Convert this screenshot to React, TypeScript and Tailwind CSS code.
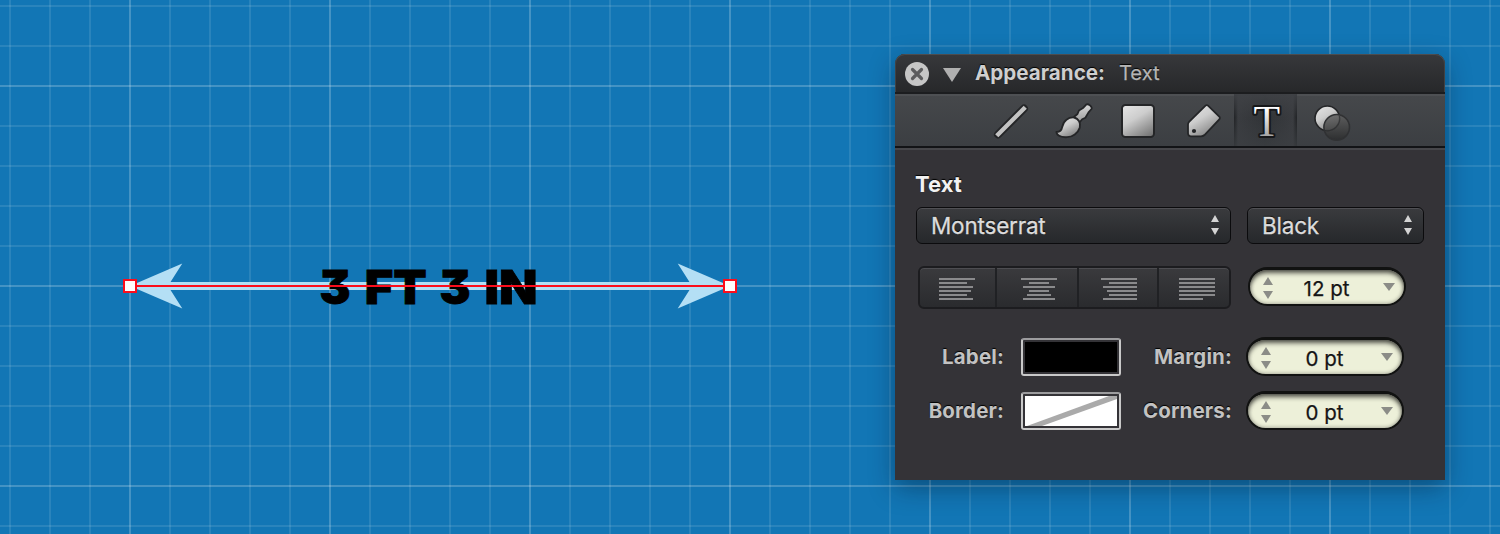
import React from 'react';

const TEXT_SHADOW = '[text-shadow:0_-1px_1px_#000]';

function Canvas() {
  const lines = [];
  for (let x = 9; x < 1500; x += 40) {
    lines.push(
      <rect key={'v' + x} x={x} y={0} width={2} height={534} fill="#fff" opacity={(x - 129) % 200 === 0 ? 0.21 : 0.1} />
    );
  }
  for (let y = 5; y < 534; y += 40) {
    lines.push(
      <rect key={'h' + y} x={0} y={y} width={1500} height={2} fill="#fff" opacity={(y - 85) % 200 === 0 ? 0.21 : 0.1} />
    );
  }
  return (
    <svg className="absolute inset-0" width="1500" height="534" viewBox="0 0 1500 534" role="img" aria-label="Dimension line">
      {lines}
      <path
        fill="#b4dff5"
        d="M130 286 182.300 263.6 170.500 282H689.5L677.700 263.6 730 286 677.700 308.400 689.5 290H170.5L182.300 308.400Z"
      />
      <g
        className="[font-feature-settings:'cv09'] font-[Inter,sans-serif]"
        fontWeight="900"
        fontSize="46.200"
        fill="#000"
        stroke="#000"
        strokeWidth="0.8"
      >
        <text x="319.500" y="304" textLength="31" lengthAdjust="spacingAndGlyphs">3</text>
        <text x="364.800" y="304" textLength="62" lengthAdjust="spacingAndGlyphs">FT</text>
        <text x="439.500" y="304" textLength="31" lengthAdjust="spacingAndGlyphs">3</text>
        <text x="484.500" y="304" textLength="53" lengthAdjust="spacingAndGlyphs">IN</text>
      </g>
      <path d="M130 286H730" stroke="#fc0d1b" strokeWidth="2" />
      <rect x="124" y="280" width="12" height="12" fill="#fff" stroke="#fc0d1b" strokeWidth="2" />
      <rect x="724" y="280" width="12" height="12" fill="#fff" stroke="#fc0d1b" strokeWidth="2" />
    </svg>
  );
}

function Gradients() {
  return (
    <svg className="absolute" width="0" height="0" aria-hidden="true">
      <defs>
        <linearGradient id="metal" x1="0.2" y1="0" x2="0.8" y2="1">
          <stop offset="0" stopColor="#e2e2e2" />
          <stop offset="0.4" stopColor="#cdcdcd" />
          <stop offset="1" stopColor="#777" />
        </linearGradient>
        <linearGradient id="plain" x1="0" y1="0" x2="0" y2="1">
          <stop offset="0" stopColor="#dadada" />
          <stop offset="1" stopColor="#9a9a9a" />
        </linearGradient>
        <linearGradient id="letter" x1="0" y1="0" x2="0" y2="1">
          <stop offset="0.25" stopColor="#fff" />
          <stop offset="0.8" stopColor="#a8a8a8" />
        </linearGradient>
        <linearGradient id="lens" x1="0" y1="0" x2="0" y2="1">
          <stop offset="0" stopColor="#626262" />
          <stop offset="1" stopColor="#2b2c2d" />
        </linearGradient>
      </defs>
    </svg>
  );
}

function Toolbar() {
  return (
    <div className="flex h-14 border-b-2 border-[#46464a] bg-linear-to-b from-[#46484b] to-[#3b3e42] pl-[84px] shadow-[inset_0_2px_0_#4e5053,inset_0_-2px_0_#121316]">
      <svg width="64" height="52" viewBox="979 94 64 52">
        <path d="M998 134.500 1024 108.500" stroke="#242527" strokeWidth="8" strokeLinecap="round" />
        <path d="M998.300 134.200 1023.700 108.800" stroke="#c3c3c3" strokeWidth="4.400" strokeLinecap="square" />
      </svg>
      <svg width="64" height="52" viewBox="1043 94 64 52">
        <path
          d="M1074.200 116.700 1077.500 114 1079 110.400 1083.400 107.700 1086.200 104.600Q1087.700 103.600 1090 105.400 1092.400 107.500 1091.500 109L1088.500 112.400 1085.400 117.700 1082.200 119.200 1079.500 122.500Z"
          fill="url(#plain)" stroke="#242527" strokeWidth="1.800" strokeLinejoin="round"
        />
        <path
          d="M1056.400 132Q1061.200 132.300 1062.300 126.800C1063.300 120.800 1068.500 117 1074 117.500 1078.800 118.500 1080.900 123 1079.800 127.600 1078 133.200 1072.500 137 1067 137.200 1062 137.500 1057 136 1056.400 132Z"
          fill="url(#metal)" stroke="#242527" strokeWidth="1.800" strokeLinejoin="round"
        />
      </svg>
      <svg width="64" height="52" viewBox="1107 94 64 52">
        <rect x="1122" y="105" width="32" height="32" rx="3.500" fill="url(#metal)" stroke="#242527" strokeWidth="2" />
      </svg>
      <svg width="63" height="52" viewBox="1171 94 63 52">
        <path
          d="M1205.500 105.600Q1206.800 104.600 1208 105.700L1219.500 116.800Q1220.400 118 1219.500 119.200L1204.500 135Q1203 136.300 1201 136.300H1191Q1188.300 136.300 1188 133.500V124.500Q1188 123 1189.300 121.700Z"
          fill="url(#metal)" stroke="#242527" strokeWidth="1.800"
        />
        <circle cx="1194" cy="131" r="2.100" fill="#242527" />
      </svg>
      <svg
        className="bg-[linear-gradient(180deg,rgba(64,66,70,0.9)_0,rgba(50,53,57,0)_45%,rgba(60,63,67,0.7)_100%),linear-gradient(90deg,#222427_0,#2b2d30_2px,#3a3c40_4px,#303336_50%,#3a3c40_59px,#2b2d30_61px,#222427_63px)]"
        width="63" height="52" viewBox="1234 94 63 52"
      >
        <text
          x="1266.700" y="136" textAnchor="middle" fontSize="43.500" fill="url(#letter)" stroke="#17181a" strokeWidth="4"
          paintOrder="stroke" strokeLinejoin="round" className="font-['Liberation_Serif',serif]"
        >
          T
        </text>
      </svg>
      <svg width="70" height="52" viewBox="1297 94 70 52">
        <circle cx="1327.300" cy="118.300" r="12.300" fill="url(#metal)" stroke="#242527" strokeWidth="1.600" />
        <circle cx="1336.700" cy="127.300" r="12.800" fill="url(#lens)" fillOpacity="0.85" stroke="#303133" strokeWidth="1.600" />
        <path d="M1339.500 116A12.300 12.300 0 0 1 1325 130.500" fill="none" stroke="#242527" strokeOpacity="0.5" strokeWidth="1.200" />
      </svg>
    </div>
  );
}

function Select({ value, className }: { value: string; className: string }) {
  return (
    <div
      className={`flex h-[37px] items-center justify-between rounded-[6px] border-[1.5px] border-[#0b0b0d] bg-linear-to-b from-[#3a3b3e] to-[#26282b] pl-[14px] pr-[10px] shadow-[inset_0_1px_0_#505054] ${className}`}
    >
      <span className={`pt-[2px] text-[22.500px] leading-none text-[#dcdcdc] [-webkit-text-stroke:0.3px_#dcdcdc] ${TEXT_SHADOW}`}>
        {value}
      </span>
      <svg width="10" height="22" viewBox="0 0 10 22" fill="#d4d4d4" className="-mt-[2px]">
        <path d="M5 1 9 8H1ZM5 21 9 14H1Z" />
      </svg>
    </div>
  );
}

const ALIGN: number[][][] = [
  [[0, 36], [0, 28], [0, 34], [0, 32], [0, 28], [0, 34]],
  [[0, 36], [8, 20], [2, 32], [8, 20], [6, 24], [2, 32]],
  [[0, 36], [8, 28], [2, 34], [6, 30], [8, 28], [2, 34]],
  [[0, 36], [0, 36], [0, 36], [0, 36], [0, 36], [0, 24]],
];
const SEG_CLASS = [
  'w-[77px] border-r-2 pl-[19px]',
  'w-[82px] border-r-2 pl-[24px]',
  'w-[80px] border-r-2 pl-[22px]',
  'w-[70px] pl-[20px]',
];

function AlignButtons() {
  return (
    <div className="ml-[2px] flex h-[43px] w-[313px] rounded-[6px] border-2 border-[#1c1c1f] bg-linear-to-b from-[#3a3a3d] to-[#2a2b2e] shadow-[inset_0_1px_0_#4d4d51]">
      {ALIGN.map((rows, i) => (
        <div key={i} className={`flex items-center border-[#202124] ${SEG_CLASS[i]}`}>
          <svg width="36" height="22" viewBox="0 0 36 22" className="mt-[2px]">
            {rows.map(([x, w], r) => (
              <rect key={r} x={x} y={r * 4} width={w} height="2" fill="#8a8a8c" />
            ))}
          </svg>
        </div>
      ))}
    </div>
  );
}

function Stepper({ value }: { value: string }) {
  return (
    <div className="flex h-[39px] w-[158px] items-center rounded-full border-2 border-t-[3px] border-[#111211] bg-[#edf0d9] pl-[13px] pr-[9px] shadow-[inset_0_4px_5px_-1px_rgba(0,0,0,0.6),inset_0_0_4px_rgba(0,0,0,0.4)]">
      <svg width="10" height="22" viewBox="0 0 10 22" fill="#8b8c87" className="mt-[2px]">
        <path d="M5 0 10 8H0ZM5 22 10 14H0Z" />
      </svg>
      <span className="mt-[4px] flex-1 pr-[3px] text-center text-[20.500px] leading-none text-[#151515] [-webkit-text-stroke:0.25px_#151515]">
        {value}
      </span>
      <svg width="12" height="8" viewBox="0 0 12 8" fill="#8b8c87">
        <path d="M0 0H12L6 8Z" />
      </svg>
    </div>
  );
}

function Swatch({ children }: { children: React.ReactNode }) {
  return (
    <div className="h-[38px] w-[100px] rounded-[3px] border-2 border-[#c9c9c9] border-t-[#9c9c9e] p-[2px]">
      <svg width="92" height="30" viewBox="0 0 92 30">{children}</svg>
    </div>
  );
}

function Label({ children, className }: { children: React.ReactNode; className: string }) {
  return (
    <span className={`whitespace-nowrap pt-[2px] text-right text-[20.500px] font-bold leading-none tracking-[0.15px] text-[#c2c2c2] ${TEXT_SHADOW} ${className}`}>
      {children}
    </span>
  );
}

export default function App() {
  return (
    <div className="relative flex h-[534px] w-[1500px] justify-end overflow-hidden bg-[#1276b5] pr-[55px] pt-[54px] font-[Inter,sans-serif]">
      <Canvas />
      <Gradients />
      <section className="relative h-[426px] w-[550px] overflow-visible rounded-t-[10px] bg-[#343337] shadow-[0_8px_26px_rgba(0,20,40,0.4)]">
        <header className="flex h-10 items-center rounded-t-[10px] border-b-2 border-[#1c1d1f] bg-linear-to-b from-[#37383b] to-[#27282a] pl-[10px] shadow-[inset_0_1px_0_#4c4c4e,inset_1px_0_0_#414244,inset_-1px_0_0_#414244]">
          <svg width="24" height="24" viewBox="0 0 24 24" className="mt-[1px]">
            <circle cx="12" cy="12" r="12" fill="#c6c6c6" />
            <path d="M7.500 7.500 16.500 16.500M16.500 7.500 7.500 16.500" stroke="#5c5c5e" strokeWidth="3.200" strokeLinecap="round" />
          </svg>
          <svg width="18" height="14" viewBox="0 0 18 14" className="ml-[14px] mt-[3px]">
            <path d="M0 0H18L9 14Z" fill="#b0b0b0" />
          </svg>
          <span className={`ml-[14px] text-[20.600px] font-bold leading-none text-[#cfcfcf] ${TEXT_SHADOW}`}>Appearance:</span>
          <span className={`ml-[14px] text-[20.200px] leading-none text-[#b5b5b5] [-webkit-text-stroke:0.25px_#b5b5b5] ${TEXT_SHADOW}`}>Text</span>
        </header>
        <Toolbar />
        <div className="pl-[21px]">
          <h2 className={`ml-[-1px] pt-[24px] text-[22px] font-bold leading-[21px] text-[#f2f2f2] ${TEXT_SHADOW}`}>Text</h2>
          <div className="mt-[12px] flex">
            <Select value="Montserrat" className="w-[315px] tracking-[-0.2px]" />
            <Select value="Black" className="ml-[16px] w-[177px] tracking-[-0.2px]" />
          </div>
          <div className="mt-[22px] flex h-[44px]">
            <AlignButtons />
            <div className="ml-[17px] mt-[1px]">
              <Stepper value="12 pt" />
            </div>
          </div>
          <div className="mt-[27px] flex items-center">
            <Label className="w-[88px]">Label:</Label>
            <div className="ml-[17px]">
              <Swatch><rect width="92" height="30" fill="#000" /></Swatch>
            </div>
            <Label className="ml-[11px] w-[100px]">Margin:</Label>
            <div className="ml-[14px]">
              <Stepper value="0 pt" />
            </div>
          </div>
          <div className="mt-[15px] flex items-center">
            <Label className="w-[88px]">Border:</Label>
            <div className="ml-[17px]">
              <Swatch>
                <rect width="92" height="30" fill="#fff" />
                <path d="M2 30H17L92 3V0H84Z" fill="#aaa" />
              </Swatch>
            </div>
            <Label className="ml-[11px] w-[100px]">Corners:</Label>
            <div className="ml-[14px]">
              <Stepper value="0 pt" />
            </div>
          </div>
        </div>
      </section>
    </div>
  );
}
